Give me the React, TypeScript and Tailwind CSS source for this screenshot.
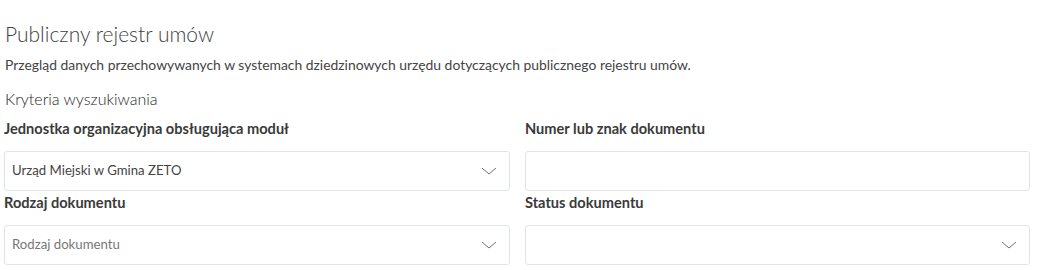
function Chevron() {
  return (
    <svg width="16" height="8" viewBox="0 0 16 8" fill="none" className="shrink-0">
      <path d="M1 1l7 6 7-6" stroke="#6b7280" strokeWidth="1" />
    </svg>
  )
}

function Field({ label, first, children }: { label: string; first?: boolean; children: React.ReactNode }) {
  return (
    <div className="flex flex-col">
      <div
        className={`${first ? 'h-[40px] pt-[8px]' : 'h-[34px] pt-[2px]'} text-[14.6px] font-bold leading-[20px] text-[#3a3a3a]`}
      >
        {label}
      </div>
      {children}
    </div>
  )
}

function SelectBox({ value, placeholder }: { value?: string; placeholder?: string }) {
  return (
    <div className="flex h-[40px] items-center justify-between rounded-[3px] border border-[#dfe4ea] bg-white pl-[7px] pr-[12px]">
      <span className={`text-[13.2px] ${value ? 'text-[#444]' : 'text-[#777]'}`}>{value || placeholder}</span>
      <Chevron />
    </div>
  )
}

export default function App() {
  return (
    <div className="min-h-[270px] bg-white pl-[4px] pt-[20px] font-['Lato',sans-serif] text-[#444]">
      <div className="w-[1026px]">
        <h1 className="pl-[1px] text-[21px] font-light leading-[28px] text-[#3f3f3f]">Publiczny rejestr umów</h1>
        <p className="mt-[8px] pl-[1px] text-[13.9px] leading-[18px] text-[#444]">
          Przegląd danych przechowywanych w systemach dziedzinowych urzędu dotyczących publicznego rejestru umów.
        </p>
        <h2 className="mt-[13px] pl-[1px] text-[16px] font-light leading-[24px] text-[#262626]">Kryteria wyszukiwania</h2>
        <div className="grid grid-cols-[506px_505px] gap-x-[15px]">
          <Field label="Jednostka organizacyjna obsługująca moduł" first>
            <SelectBox value="Urząd Miejski w Gmina ZETO" />
          </Field>
          <Field label="Numer lub znak dokumentu" first>
            <input className="h-[40px] rounded-[3px] border border-[#dfe4ea] bg-white px-[8px] text-[14px] outline-none" />
          </Field>
          <Field label="Rodzaj dokumentu">
            <SelectBox placeholder="Rodzaj dokumentu" />
          </Field>
          <Field label="Status dokumentu">
            <SelectBox value="" />
          </Field>
        </div>
      </div>
    </div>
  )
}
